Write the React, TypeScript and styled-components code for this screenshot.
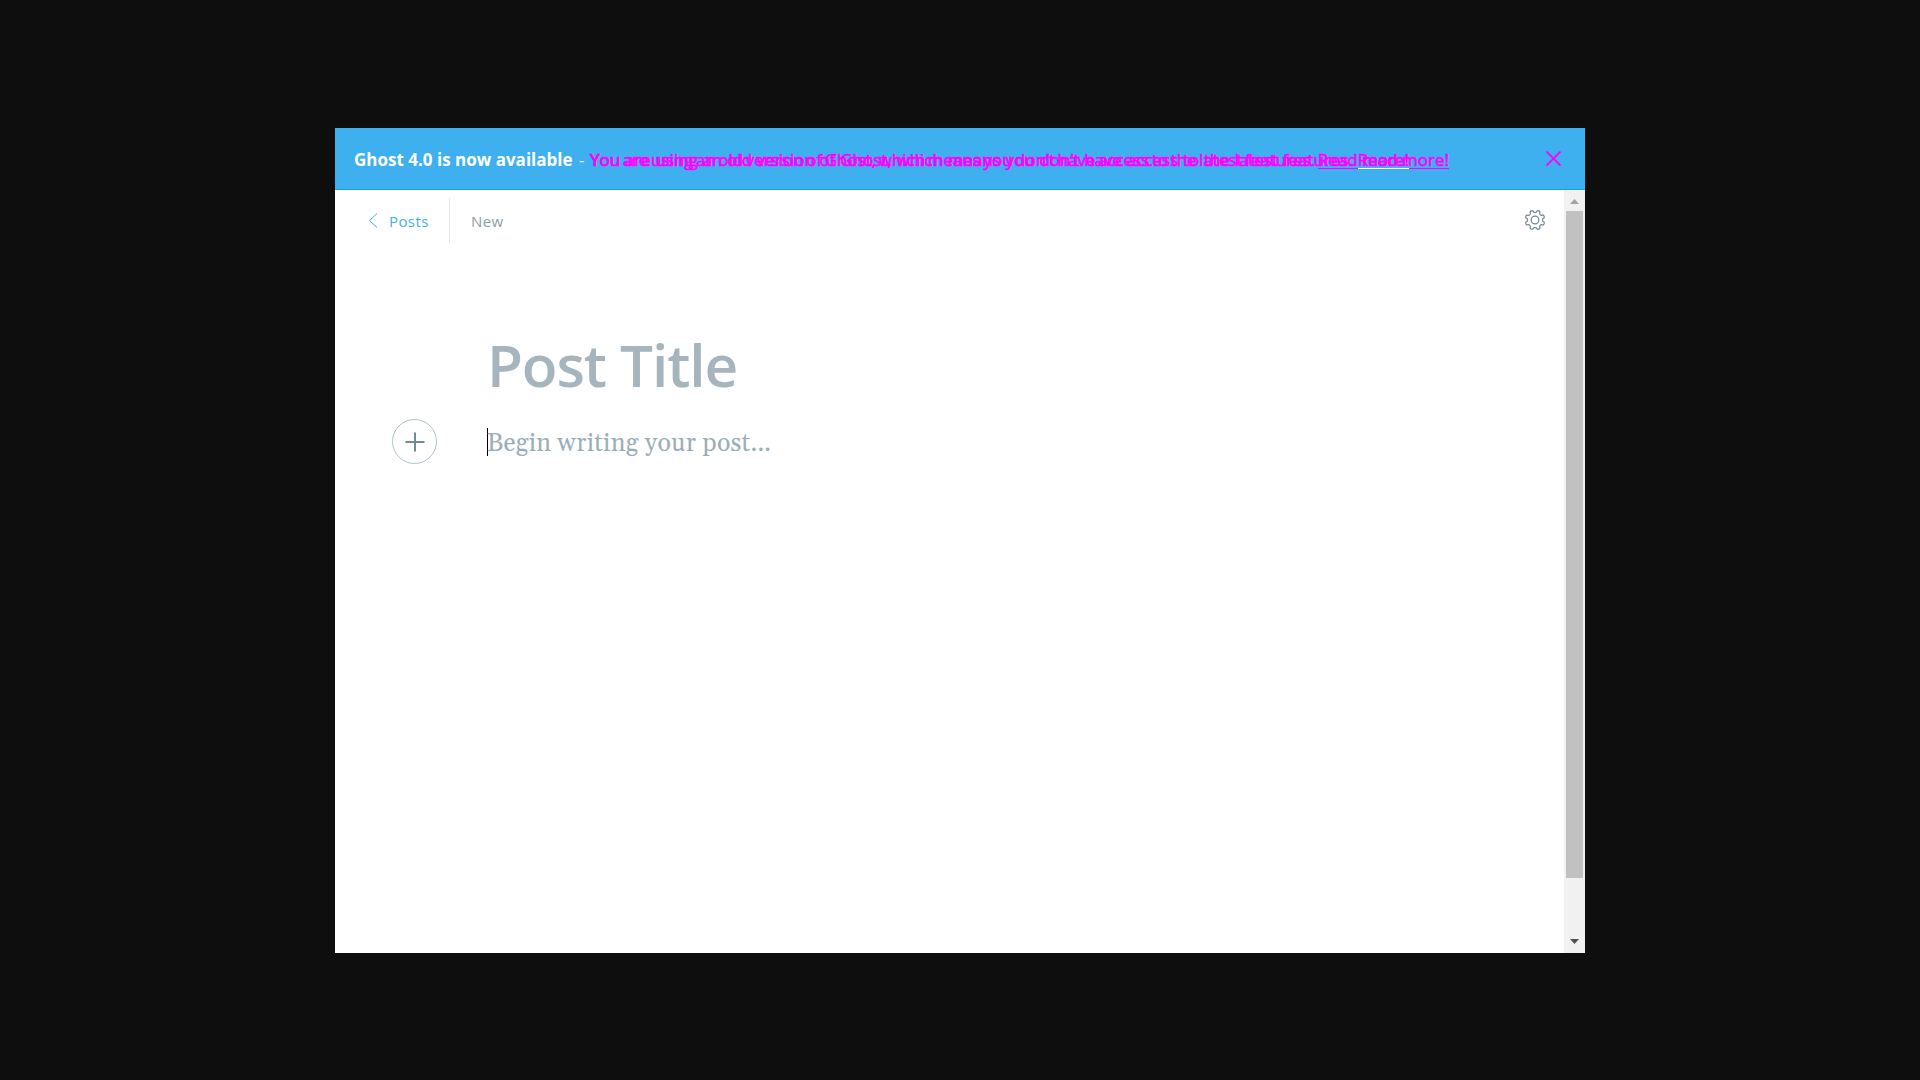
import React from 'react';
import styled, { createGlobalStyle } from 'styled-components';

const Global = createGlobalStyle`
  * { box-sizing: border-box; }
  body { margin: 0; background: #0e0e0e; }
`;
const sans = '"Open Sans", "Noto Sans", sans-serif';

const Page = styled.main`
  height: 1080px;
  padding: 128px 335px 127px;
  overflow: hidden;
  font-family: ${sans};
`;
const Frame = styled.div`
  width: 1250px;
  height: 825px;
  display: flex;
  flex-direction: column;
  background: #fff;
`;
const Banner = styled.header`
  height: 62px;
  flex: none;
  display: flex;
  align-items: center;
  padding: 0 23px 0 19px;
  background: #3eb0ef;
  border-bottom: 1px solid #1a9be3;
  color: #fff;
  font-size: 17px;
  line-height: 23px;
  white-space: pre;
`;
const Line = styled.span<{ $width: number; $bold?: boolean }>`
  width: ${p => p.$width}px;
  flex: none;
  padding-top: 2px;
  font-weight: ${p => (p.$bold ? 700 : 400)};
`;
const Messages = styled.div`
  flex: 1;
  display: grid;
  padding-top: 2px;
  color: #f0f;
`;
const Message = styled.span<{ $spacing: number }>`
  grid-area: 1 / 1;
  word-spacing: ${p => p.$spacing}px;
  -webkit-text-stroke: 0.6px #f0f;
`;
const ReadMore = styled.a<{ $overlap?: boolean }>`
  position: relative;
  display: inline-block;
  word-spacing: 0;
  &::before {
    content: '';
    position: absolute;
    right: 0;
    bottom: 2px;
    width: 100%;
    height: 1px;
    background: #f0f;
  }
  &::after {
    content: '';
    position: absolute;
    right: 0;
    bottom: 2px;
    width: ${p => (p.$overlap ? 51 : 0)}px;
    height: 1px;
    background: #fff;
  }
`;
const Body = styled.div`
  flex: 1;
  display: flex;
  min-height: 0;
`;
const Editor = styled.section`
  flex: 1;
`;
const Toolbar = styled.nav`
  display: flex;
  align-items: center;
  height: 61px;
  padding: 0 18px 0 33px;
  color: #8a9ea8;
  font-size: 15px;
  letter-spacing: 0.4px;
`;
const Back = styled.a`
  display: flex;
  align-items: center;
  gap: 11px;
  width: 82px;
  height: 45px;
  border-right: 1px solid #e1e9ee;
  color: #3eb0ef;
`;
const Current = styled.span`
  flex: 1;
  padding-left: 21px;
`;
const Title = styled.h1`
  margin: 74px 0 0 152px;
  font-size: 58.500px;
  line-height: 78px;
  font-weight: 600;
  letter-spacing: -1.1px;
  color: #a6b5bd;
`;
const Writing = styled.div`
  display: flex;
  align-items: center;
  margin: 16px 0 0 57px;
`;
const Plus = styled.button`
  width: 45px;
  height: 45px;
  padding: 0;
  display: grid;
  place-items: center;
  border: 1px solid #afc1c9;
  border-radius: 50%;
  background: #fff;
`;
const Prompt = styled.p`
  margin: 0 0 0 50px;
  height: 28px;
  border-left: 1px solid #000;
  font: 25px/32px Georgia, Gelasio, "Liberation Serif", serif;
  letter-spacing: 0.22px;
  text-indent: -1px;
  color: #9baeb8;
`;
const Scroll = styled.aside`
  width: 21px;
  background: #f1f1f1;
  display: flex;
  flex-direction: column;
  align-items: center;
`;
const Thumb = styled.div`
  width: 17px;
  height: 667px;
  margin-bottom: auto;
  background: #c1c1c1;
`;
const Arrow = styled.svg`
  width: 21px;
  height: 21px;
  flex: none;
`;

const gearPath = Array.from({ length: 144 }, (_, i) => {
  const angle = (i / 144) * Math.PI * 2;
  const radius = 8.65 - 1.15 * Math.tanh(2.2 * Math.cos(8 * angle));
  return `${i ? 'L' : 'M'}${(10 + radius * Math.cos(angle)).toFixed(2)} ${(10 + radius * Math.sin(angle)).toFixed(2)}`;
}).join('') + 'Z';

const Gear = () => (
  <svg width="21" height="21" viewBox="0 0 21 21" fill="none" stroke="#738a94" strokeWidth="1.25">
    <path d={gearPath} strokeLinejoin="round" />
    <circle cx="10" cy="10" r="3.8" />
  </svg>
);

const notice = 'You are using an old version of Ghost, which means you don’t have access to the latest features. ';

export default function App() {
  return (
    <Page>
      <Global />
      <Frame>
        <Banner>
          <Line $width={225} $bold>Ghost 4.0 is now available</Line>
          <Line $width={11}>-</Line>
          <Messages>
            <Message $spacing={0.28}>{notice}<ReadMore>Read more!</ReadMore></Message>
            <Message $spacing={-1.94}>{notice}<ReadMore $overlap>Read more!</ReadMore></Message>
          </Messages>
          <svg width="16" height="16" viewBox="0 0 16 16"><path d="M.5 .5l14 14M14.500 .5L.5 14.500" stroke="#f0f" strokeWidth="1.8" /></svg>
        </Banner>
        <Body>
          <Editor>
            <Toolbar>
              <Back>
                <svg width="10" height="16" viewBox="0 0 10 16"><path d="M9 .5L1.500 7.500L9 14.500" fill="none" stroke="#3eb0ef" strokeWidth="1" /></svg>
                Posts
              </Back>
              <Current>New</Current>
              <Gear />
            </Toolbar>
            <Title>Post Title</Title>
            <Writing>
              <Plus><svg width="20" height="20"><path d="M10 0.500v19M.5 10h19" stroke="#738a94" strokeWidth="2" /></svg></Plus>
              <Prompt>Begin writing your post...</Prompt>
            </Writing>
          </Editor>
          <Scroll>
            <Arrow viewBox="0 0 21 21"><path d="M6 14L10.500 9L15 14Z" fill="#a3a3a3" /></Arrow>
            <Thumb />
            <Arrow viewBox="0 0 21 21"><path d="M6 7L15 7L10.500 12Z" fill="#505050" /></Arrow>
          </Scroll>
        </Body>
      </Frame>
    </Page>
  );
}
